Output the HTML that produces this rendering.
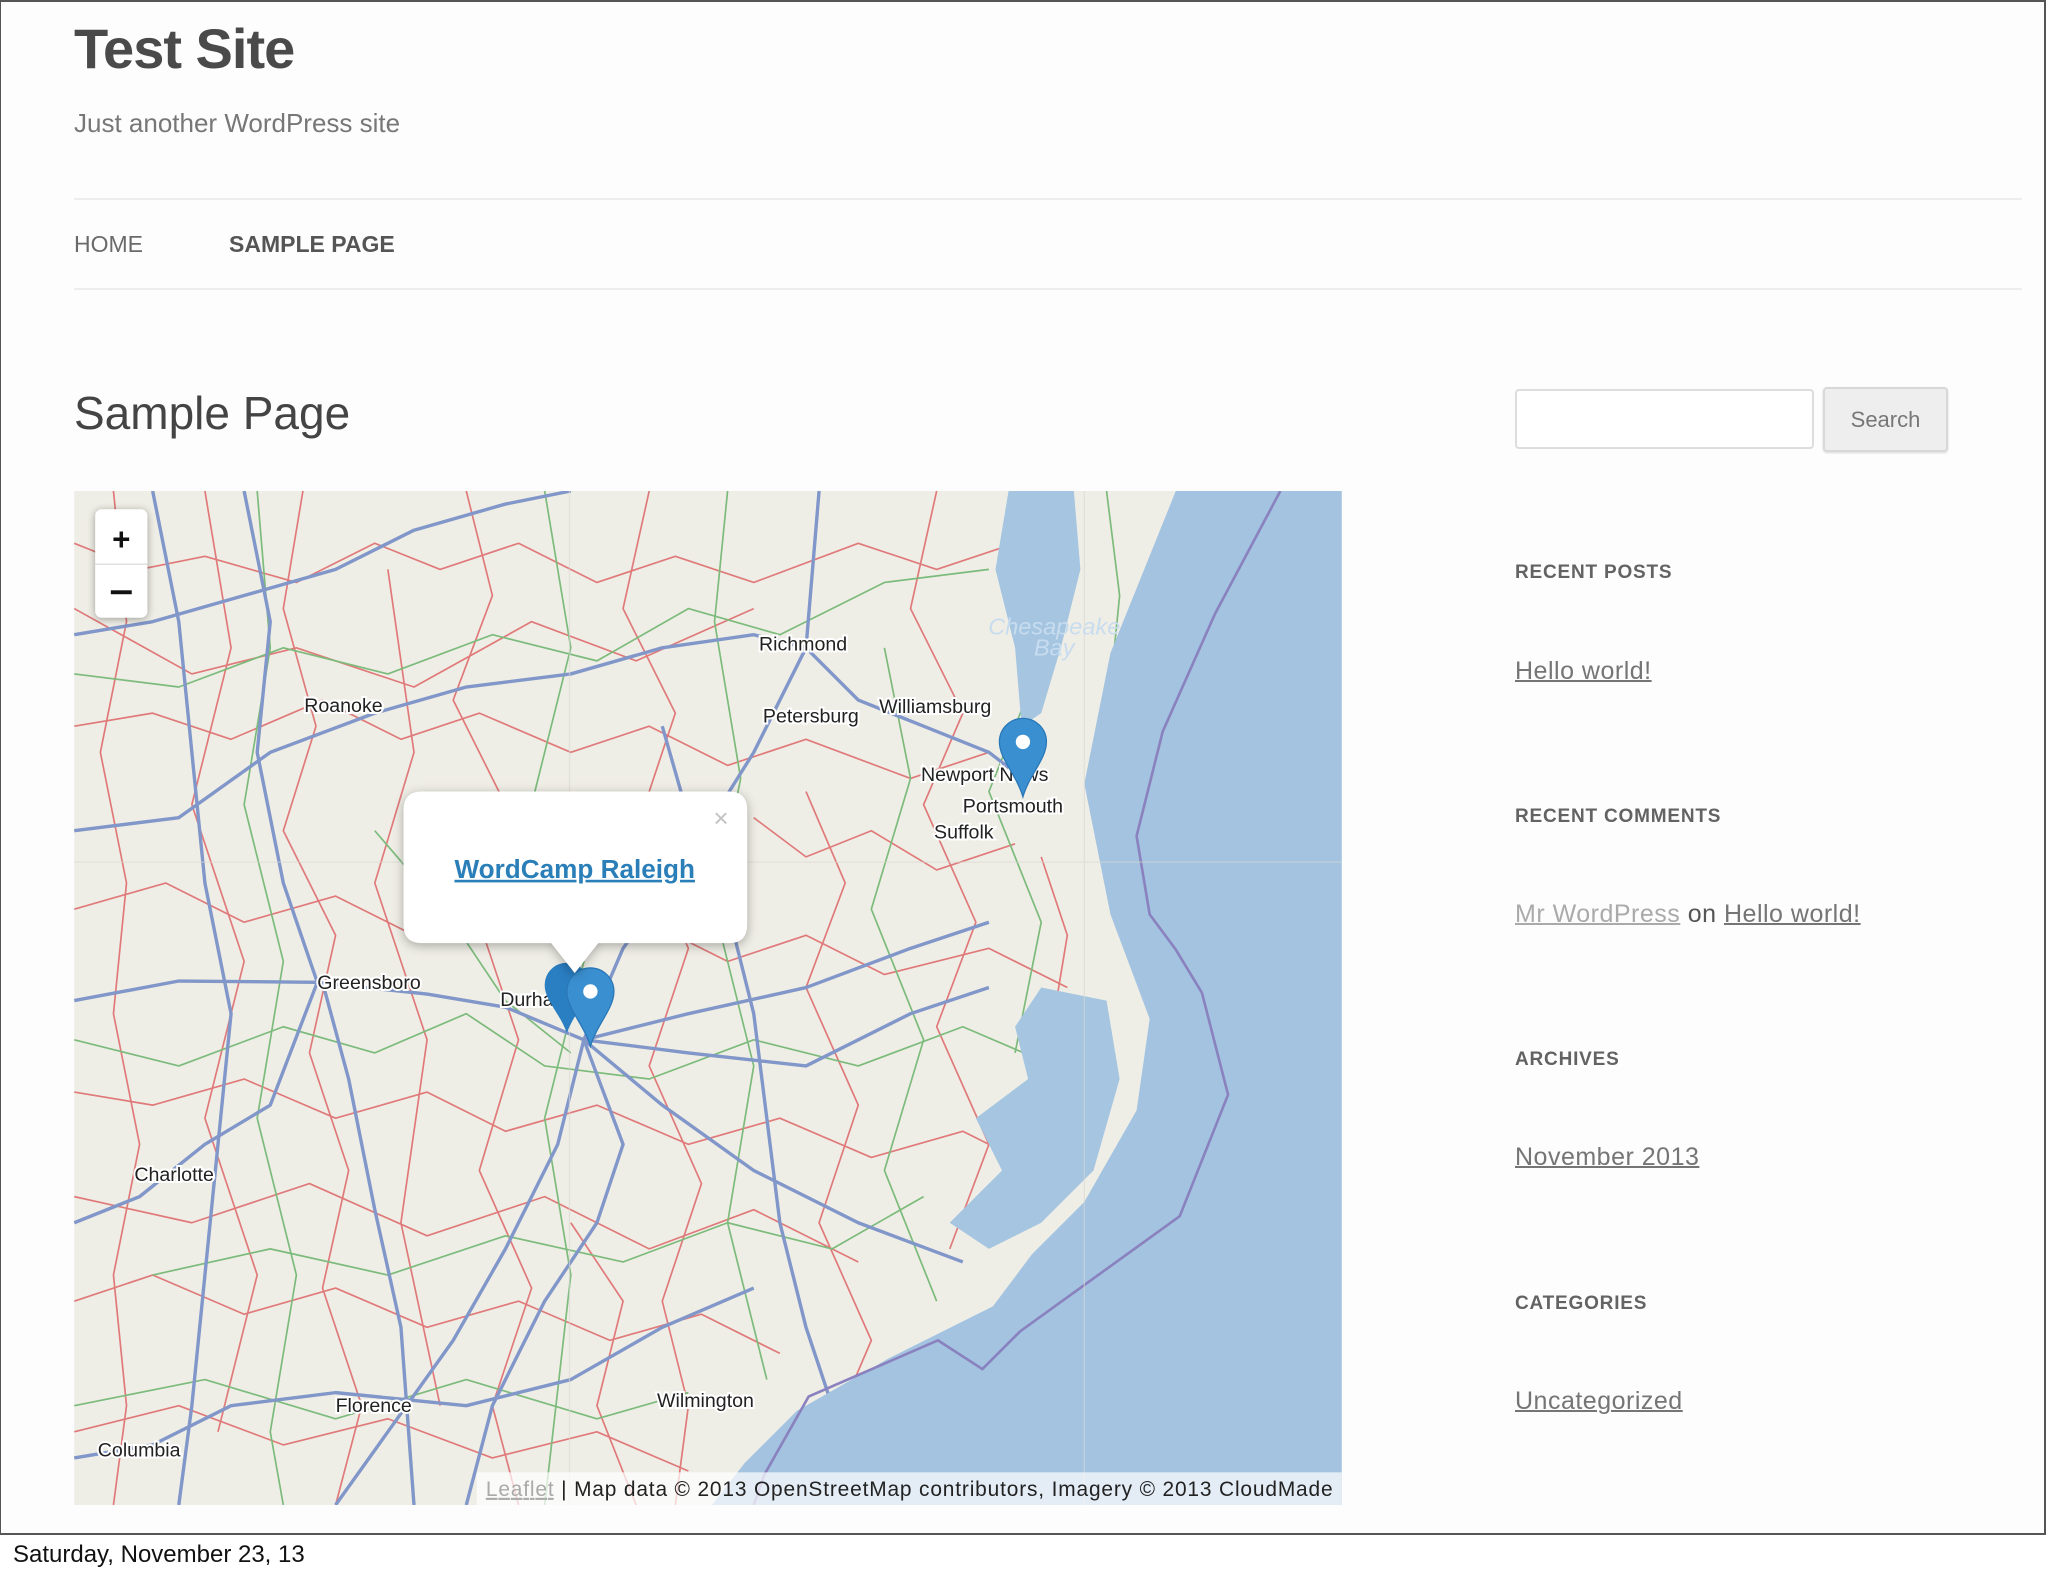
<!DOCTYPE html>
<html><head><meta charset="utf-8"><style>
*{margin:0;padding:0;box-sizing:border-box}
html,body{width:2048px;height:1576px;background:#fff;overflow:hidden;font-family:"Liberation Sans",sans-serif}
.frame{position:absolute;left:0;top:0;width:2046px;height:1535px;border:1px solid #555;border-top:2px solid #555;border-right:2px solid #555;border-bottom:2px solid #555;background:#fdfdfd}
.a{position:absolute;white-space:nowrap}
.hl{position:absolute;left:74px;width:1948px;height:2px;background:#ededed}
.wh{font-weight:bold;font-size:19px;color:#636363;letter-spacing:.8px}
.wl{font-size:25px;color:#757575;text-decoration:underline;text-decoration-thickness:2px;letter-spacing:.5px}
</style></head><body>
<div class="frame"></div>
<div class="a" style="left:74px;top:16px;font-size:56px;font-weight:bold;color:#4a4a4a;letter-spacing:-1px">Test Site</div>
<div class="a" style="left:74px;top:108px;font-size:26px;color:#777">Just another WordPress site</div>
<div class="hl" style="top:198px"></div>
<div class="a" style="left:74px;top:231px;font-size:23px;color:#6a6a6a">HOME</div>
<div class="a" style="left:229px;top:231px;font-size:23px;font-weight:bold;color:#555">SAMPLE PAGE</div>
<div class="hl" style="top:288px"></div>
<div class="a" style="left:74px;top:386px;font-size:46px;color:#444">Sample Page</div>

<div class="a" style="left:1515px;top:389px;width:299px;height:60px;border:2px solid #ddd;border-radius:4px;background:#fff"></div>
<div class="a" style="left:1823px;top:387px;width:125px;height:65px;border:2px solid #d8d8d8;border-radius:4px;background:#eee;box-shadow:0 1px 2px rgba(0,0,0,.15);font-size:22px;color:#777;text-align:center;line-height:61px">Search</div>

<div class="a wh" style="left:1515px;top:562px">RECENT POSTS</div>
<div class="a wl" style="left:1515px;top:657px">Hello world!</div>
<div class="a wh" style="left:1515px;top:806px">RECENT COMMENTS</div>
<div class="a" style="left:1515px;top:900px;font-size:25px;color:#555;letter-spacing:.5px"><span style="color:#aaa;text-decoration:underline;text-decoration-thickness:2px">Mr WordPress</span> on <span style="color:#757575;text-decoration:underline;text-decoration-thickness:2px">Hello world!</span></div>
<div class="a wh" style="left:1515px;top:1049px">ARCHIVES</div>
<div class="a wl" style="left:1515px;top:1143px">November 2013</div>
<div class="a wh" style="left:1515px;top:1293px">CATEGORIES</div>
<div class="a wl" style="left:1515px;top:1387px">Uncategorized</div>

<div class="a" style="left:13px;top:1541px;font-size:24px;color:#111">Saturday, November 23, 13</div>

<svg class="a" style="left:74px;top:491px" width="1268" height="1014" viewBox="0 0 970 776" font-family="Liberation Sans, sans-serif">
<rect width="970" height="776" fill="#efeee6"/>
<g fill="none" stroke-linejoin="round">
<g stroke="#e07a7a" stroke-width="1.3">
<polyline points="0,40 50,60 100,50 170,70 230,40 280,60 340,40 400,70 460,50 520,70 600,40 660,60 720,40"/>
<polyline points="0,180 60,170 120,190 190,160 250,190 310,170 380,200 440,180 500,210 560,190 640,220 700,200"/>
<polyline points="0,320 70,300 130,330 200,310 260,340 320,320 380,350 440,330 500,360 560,340 620,370 700,350 760,380"/>
<polyline points="0,460 60,470 130,450 200,480 270,460 330,490 400,470 470,500 540,480 610,510 680,490 740,520"/>
<polyline points="0,620 60,600 130,630 200,610 270,640 340,620 410,650 480,630 540,660"/>
<polyline points="0,720 80,700 160,730 240,710 320,740 400,720 470,750"/>
<polyline points="30,0 40,100 20,200 40,300 30,400 50,500 30,600 40,700 30,776"/>
<polyline points="175,0 160,90 185,180 160,260 200,340 180,430 210,520 190,610 220,700 200,776"/>
<polyline points="300,0 320,80 290,160 330,240 310,330 340,420 310,520 350,610 320,700 340,776"/>
<polyline points="440,0 420,90 460,170 430,260 470,350 440,440 480,530 450,620 470,700 460,776"/>
<polyline points="560,230 590,300 560,380 600,470 570,560 610,650 580,720"/>
<polyline points="660,0 640,90 680,170 650,240 690,330 660,410 700,500 670,580"/>
<polyline points="100,0 120,120 90,240 130,360 100,480 140,600 110,720"/>
<polyline points="240,60 260,200 230,300 270,420 250,560 280,700"/>
<polyline points="0,90 90,140 170,120 260,150 350,100 430,130 520,90"/>
<polyline points="0,540 90,560 180,530 270,570 360,540 440,580 520,550 600,590"/>
<polyline points="380,560 420,620 400,700 430,776"/>
<polyline points="520,250 560,280 610,260 660,290 720,270"/>
<polyline points="740,280 760,340 750,400 780,440 790,480"/>
</g>
<g stroke="#7cbb7c" stroke-width="1.3">
<polyline points="0,140 80,150 160,120 240,140 320,110 400,130 470,90 540,110 620,70 700,60"/>
<polyline points="0,420 80,440 160,410 230,430 300,400 360,440 440,450 520,420 600,440 680,410 750,440"/>
<polyline points="60,600 150,580 240,600 330,570 420,590 500,560 580,580 650,540"/>
<polyline points="140,0 150,120 130,240 160,360 140,480 170,600 150,720 160,776"/>
<polyline points="360,0 380,120 350,240 390,360 360,480 380,600 360,776"/>
<polyline points="500,0 490,100 510,220 490,320 520,440 500,560 530,680"/>
<polyline points="620,120 640,220 610,320 650,420 620,520 660,620"/>
<polyline points="720,30 740,130 700,230 740,330 720,430"/>
<polyline points="790,0 800,80 790,180"/>
<polyline points="0,700 100,680 200,710 300,680 400,710 470,690"/>
<polyline points="230,260 290,330 330,390 380,430"/>
</g>
<g stroke="#8196c9" stroke-width="2.6">
<polyline points="0,110 60,100 130,80 200,60 260,30 330,10 380,0"/>
<polyline points="0,390 80,375 186,376 270,385 330,395 390,420 470,400 560,380 640,350 700,330"/>
<polyline points="60,0 80,100 90,200 100,300 120,400 110,500 100,600 90,700 80,776"/>
<polyline points="190,376 210,450 230,550 250,640 260,776"/>
<polyline points="390,420 370,500 330,580 290,650 240,720 200,776"/>
<polyline points="390,420 450,470 520,520 600,560 680,590"/>
<polyline points="390,420 420,350 470,280 520,200 560,120 570,0"/>
<polyline points="560,120 600,160 650,180 700,200 726,220"/>
<polyline points="186,376 160,300 140,200 150,100 130,0"/>
<polyline points="0,260 80,250 150,200 230,170 300,150 380,140 450,120 520,110 560,120"/>
<polyline points="390,420 470,430 560,440 640,400 700,380"/>
<polyline points="0,560 50,540 100,500 150,470 186,376"/>
<polyline points="300,776 320,700 360,620 400,560 420,500 390,420"/>
<polyline points="600,776 580,700 560,640 540,560 530,480 520,400 500,320 470,250 450,180"/>
<polyline points="0,740 60,730 120,700 200,690 300,700 380,680 450,640 520,610"/>
</g>
</g>
<path d="M715,0 L765,0 770,60 755,120 740,170 725,180 720,120 705,60Z" fill="#a5c5e1"/>
<path d="M740,380 790,390 800,450 780,520 740,560 700,580 670,560 710,520 690,480 730,450 720,410Z" fill="#a5c5e1"/>
<path d="M843,0 793,124 773,224 793,324 823,404 813,474 773,544 733,584 703,624 623,664 553,704 513,744 488,776 970,776 970,0Z" fill="#a3c3e0"/>
<path d="M923,0 873,94 833,184 813,264 823,324 843,351 863,384 883,462 846,555 724,643 695,672 661,650 562,693 528,753 520,776" fill="none" stroke="#8a82bf" stroke-width="2"/>
<g stroke="#d8d8d2" stroke-width="1" opacity=".6"><line x1="379" y1="0" x2="379" y2="776"/><line x1="773" y1="0" x2="773" y2="776"/><line x1="0" y1="284" x2="970" y2="284"/></g>
<g font-size="15" fill="#222" stroke="#fff" stroke-width="3" paint-order="stroke">
<text x="524" y="122">Richmond</text><text x="176" y="169">Roanoke</text>
<text x="527" y="177">Petersburg</text><text x="616" y="170">Williamsburg</text>
<text x="648" y="222">Newport News</text><text x="680" y="246">Portsmouth</text>
<text x="658" y="266">Suffolk</text><text x="186" y="381">Greensboro</text>
<text x="326" y="394">Durham</text><text x="46" y="528">Charlotte</text>
<text x="200" y="705">Florence</text><text x="446" y="701">Wilmington</text>
<text x="18" y="739">Columbia</text>
</g>
<g font-size="18" font-style="italic" fill="#c8dcef" text-anchor="middle"><text x="750" y="110">Chesapeake</text><text x="750" y="126">Bay</text></g>
<g>
<path d="M377,415 C372,400 360,390 360,378 A17,17 0 0 1 394,378 C394,390 382,400 377,415Z" fill="#2a7ec2"/>
<path d="M395,425 C390,408 377,396 377,383 A18,18 0 0 1 413,383 C413,396 400,408 395,425Z" fill="#3a8fd0" stroke="#2a78b8"/>
<circle cx="395" cy="383" r="5.5" fill="#fff"/>
<path d="M726,234 C721,217 708,205 708,192 A18,18 0 0 1 744,192 C744,205 731,217 726,234Z" fill="#3a8fd0" stroke="#2a78b8"/>
<circle cx="726" cy="192" r="5.5" fill="#fff"/>
</g>
<g filter="drop-shadow(0 2px 4px rgba(0,0,0,.3))"><path d="M266,230 H501 Q515,230 515,244 V332 Q515,346 501,346 H401 L383,369 365,346 H266 Q252,346 252,332 V244 Q252,230 266,230Z" fill="#fff"/></g>
<text x="383" y="296" font-size="20" font-weight="bold" fill="#2a7fb8" text-anchor="middle" text-decoration="underline">WordCamp Raleigh</text>
<text x="495" y="257" font-size="20" fill="#c3c3c3" text-anchor="middle">×</text>
<g filter="drop-shadow(0 1px 3px rgba(0,0,0,.35))"><rect x="16" y="14" width="40" height="83" rx="5" fill="#fff"/></g>
<line x1="16" y1="56" x2="56" y2="56" stroke="#ddd"/>
<text x="36" y="45" font-size="24" font-weight="bold" fill="#111" text-anchor="middle">+</text>
<rect x="28" y="76" width="16" height="3" fill="#111"/>
<rect x="308" y="751" width="662" height="25" fill="#fff" opacity=".7"/>
<text x="315" y="769" font-size="16" fill="#222" textLength="648"><tspan fill="#aaa" text-decoration="underline">Leaflet</tspan> | Map data © 2013 OpenStreetMap contributors, Imagery © 2013 CloudMade</text>
</svg>
</body></html>
